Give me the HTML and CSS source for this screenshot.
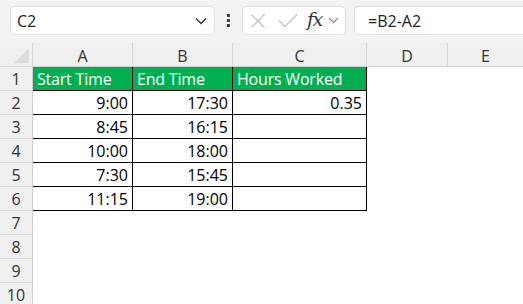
FILE: index.html
```html
<!DOCTYPE html>
<html>
<head>
<meta charset="utf-8">
<link rel="stylesheet" href="styles.css">
</head>
<body>
<div class="app">
  <div class="toolbar">
    <div class="namebox">
      <span class="name">C2</span>
      <svg class="chev" width="12" height="8" viewBox="0 0 12 8"><path d="M1 1.5 L6 6.5 L11 1.5" fill="none" stroke="#333" stroke-width="1.3"/></svg>
    </div>
    <div class="dots"><span></span><span></span><span></span></div>
    <div class="fbtns">
      <svg width="16" height="16" viewBox="0 0 16 16" class="ic-x"><path d="M1.5 1.5 L14.5 14.5 M14.5 1.5 L1.5 14.5" stroke="#c4c4c4" stroke-width="1.3" fill="none"/></svg>
      <svg width="20" height="15" viewBox="0 0 20 15" class="ic-ok"><path d="M1 7.5 L7 13.5 L19 1.5" stroke="#c4c4c4" stroke-width="1.3" fill="none"/></svg>
      <span class="fx">fx</span>
      <svg class="chev2" width="11" height="7" viewBox="0 0 11 7"><path d="M1 1 L5.5 5.5 L10 1" fill="none" stroke="#888" stroke-width="1.2"/></svg>
    </div>
    <div class="formula">=B2-A2</div>
  </div>
  <div class="sheet">
    <div class="corner"><span class="tri"></span></div>
    <div class="ch">A</div><div class="ch">B</div><div class="ch">C</div><div class="ch">D</div><div class="ch last">E</div>

    <div class="rh">1</div>
    <div class="c hd">Start Time</div><div class="c hd">End Time</div><div class="c hd">Hours Worked</div><div class="c e"></div><div class="c e"></div>

    <div class="rh">2</div>
    <div class="c n">9:00</div><div class="c n">17:30</div><div class="c n">0.35</div><div class="c e"></div><div class="c e"></div>

    <div class="rh">3</div>
    <div class="c n">8:45</div><div class="c n">16:15</div><div class="c n"></div><div class="c e"></div><div class="c e"></div>

    <div class="rh">4</div>
    <div class="c n">10:00</div><div class="c n">18:00</div><div class="c n"></div><div class="c e"></div><div class="c e"></div>

    <div class="rh">5</div>
    <div class="c n">7:30</div><div class="c n">15:45</div><div class="c n"></div><div class="c e"></div><div class="c e"></div>

    <div class="rh">6</div>
    <div class="c n">11:15</div><div class="c n">19:00</div><div class="c n"></div><div class="c e"></div><div class="c e"></div>

    <div class="rh">7</div><div class="c e span"></div>
    <div class="rh">8</div><div class="c e span"></div>
    <div class="rh">9</div><div class="c e span"></div>
    <div class="rh">10</div><div class="c e span"></div>
  </div>
</div>
</body>
</html>
```
FILE: styles.css
```css
html, body { margin: 0; padding: 0; }
body {
  width: 523px; height: 304px; overflow: hidden;
  background: #fff;
  font-family: "Open Sans", "Noto Sans", sans-serif;
  color: #000;
}
.app { display: flex; flex-direction: column; }
.toolbar {
  height: 43px; box-sizing: border-box;
  background: #f3f3f3;
  display: flex; align-items: flex-start;
  padding: 6px 0 0 10px;
}
.namebox {
  width: 205px; height: 29px; box-sizing: border-box;
  background: #fff; border: 1px solid #e1e1e1; border-radius: 5px;
  display: flex; align-items: center; justify-content: space-between;
  padding: 0 7px 0 6px;
}
.name { font-size: 16px; color: #222; }
.dots {
  width: 27px; height: 29px;
  display: flex; flex-direction: column; align-items: center; justify-content: center; gap: 2px;
}
.dots span { width: 3px; height: 3px; background: #444; display: block; }
.fbtns {
  width: 104px; height: 29px; box-sizing: border-box;
  background: #fff; border: 1px solid #e1e1e1; border-radius: 5px;
  display: flex; align-items: center;
  padding-left: 7px;
}
.ic-x { margin-right: 12px; }
.ic-ok { margin-right: 9px; }
.fx {
  font-family: "DejaVu Serif", "Liberation Serif", serif;
  font-style: italic; font-size: 19px; color: #333; letter-spacing: -1.5px;
  margin-right: 6px; margin-top: -3px;
}
.formula {
  flex: 1; height: 29px; box-sizing: border-box; margin-left: 8px;
  background: #fff; border: 1px solid #e1e1e1; border-right: none; border-radius: 5px 0 0 5px;
  font-size: 16px; color: #222;
  display: flex; align-items: center; padding-left: 13px;
}
.sheet {
  display: grid;
  grid-template-columns: 33px 100px 100px 134px 81px 75px;
  grid-template-rows: 24px repeat(10, 24px);
  font-size: 16px;
  line-height: 20px;
}
.corner {
  background: #f0f0f0; border-right: 1px solid #d8d8d8; border-bottom: 1px solid #d8d8d8;
  position: relative;
}
.tri {
  position: absolute; right: 3px; bottom: 3px;
  width: 0; height: 0;
  border-left: 15px solid transparent; border-bottom: 15px solid #dcdcdc;
}
.ch {
  background: #f0f0f0; border-right: 1px solid #d8d8d8; border-bottom: 1px solid #cfcfcf;
  display: flex; align-items: center; justify-content: center;
  padding-top: 2px; box-sizing: border-box;
  color: #333; font-size: 16px;
}
.ch.last { border-right: none; }
.rh {
  background: #f0f0f0; border-right: 1px solid #cfcfcf; border-bottom: 1px solid #d8d8d8;
  display: flex; align-items: flex-end; justify-content: center;
  padding-bottom: 1px; box-sizing: border-box;
  color: #333; font-size: 16px;
}
.c {
  box-sizing: border-box;
  display: flex; align-items: flex-end;
  padding: 0 4px 1px 4px;
  white-space: nowrap;
}
.hd {
  background: #00b050; color: #fff;
  border-right: 1px solid #000; border-bottom: 1px solid #000;
  letter-spacing: -0.2px;
}
.n {
  justify-content: flex-end;
  border-right: 1px solid #000; border-bottom: 1px solid #000;
}
.span { grid-column: 2 / -1; }
```
